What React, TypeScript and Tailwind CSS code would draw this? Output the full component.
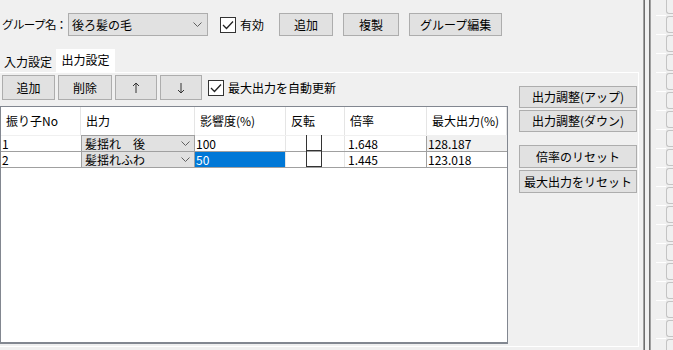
import React from "react";

const font = { fontFamily: '"Noto Sans CJK JP", "Noto Sans", sans-serif' };

function Chevron() {
  return (
    <svg width="9" height="5" viewBox="0 0 9 5" className="shrink-0">
      <path d="M0.5 0.5 L4.5 4.5 L8.5 0.5" fill="none" stroke="#606060" strokeWidth="1" />
    </svg>
  );
}

function Arrow({ down = false }: { down?: boolean }) {
  return (
    <svg width="8" height="12" viewBox="0 0 8 12" style={down ? { transform: "rotate(180deg)" } : undefined}>
      <path d="M4 1 L4 11 M1 4 L4 1 L7 4" fill="none" stroke="#333" strokeWidth="1" />
    </svg>
  );
}

function Check({ checked = true }: { checked?: boolean }) {
  return (
    <div className="w-[16px] h-[16px] bg-white border border-[#333] flex items-center justify-center shrink-0">
      {checked && (
        <svg width="12" height="10" viewBox="0 0 12 10">
          <path d="M1 5 L4.5 8.5 L11 1.5" fill="none" stroke="#222" strokeWidth="1.3" />
        </svg>
      )}
    </div>
  );
}

function Btn({ children, className = "" }: { children: React.ReactNode; className?: string }) {
  return (
    <div
      className={
        "bg-[#e1e1e1] border border-[#adadad] flex items-center justify-center text-[12px] text-black whitespace-nowrap shrink-0 " +
        className
      }
    >
      {children}
    </div>
  );
}

const cols = [80, 114, 91, 59, 82, 80];
const headers = ["振り子No", "出力", "影響度(%)", "反転", "倍率", "最大出力(%)"];
const rows = [
  { no: "1", out: "髪揺れ\u3000後", inf: "100", rate: "1.648", max: "128.187", sel: false },
  { no: "2", out: "髪揺れふわ", inf: "50", rate: "1.445", max: "123.018", sel: true },
];

function Grid() {
  return (
    <div className="w-[508px] h-[238px] bg-white border border-[#828790] border-b-2 text-[12px] text-black">
      <div className="flex h-[29px] border-b border-[#f0f0f0]">
        {headers.map((h, i) => (
          <div
            key={h}
            style={{ width: cols[i] }}
            className="border-r border-[#e5e5e5] pl-[5px] flex items-center whitespace-nowrap"
          >
            {h}
          </div>
        ))}
      </div>
      {rows.map((r) => (
        <div key={r.no} className="flex h-[16px] border-b border-[#a0a0a0] leading-[15px]">
          <div style={{ width: cols[0] }} className="pl-[1px]">
            {r.no}
          </div>
          <div
            style={{ width: cols[1] }}
            className="bg-[#e1e1e1] border border-[#a0a0a0] flex items-center justify-between pl-[3px] pr-[4px] -mt-[1px] h-[17px]"
          >
            <span>{r.out}</span>
            <Chevron />
          </div>
          <div
            style={{ width: cols[2] }}
            className={"pl-[1px] border-r border-[#e5e5e5] " + (r.sel ? "bg-[#0078d7] text-white" : "")}
          >
            {r.inf}
          </div>
          <div style={{ width: cols[3] }} className="border-r border-[#e5e5e5] flex justify-center">
            <div className="w-[16px] h-[16px] border-x border-b border-[#333] -mt-[1px] -ml-[3px]" />
          </div>
          <div style={{ width: cols[4] }} className="pl-[3px] border-r border-[#a0a0a0]">
            {r.rate}
          </div>
          <div
            style={{ width: cols[5] }}
            className={"pl-[1px] " + (r.sel ? "" : "bg-[#f0f0f0]")}
          >
            {r.max}
          </div>
        </div>
      ))}
    </div>
  );
}

function Strip() {
  const items = Array.from({ length: 20 });
  return (
    <div className="w-[22px] flex flex-col -mt-[3px]">
      {items.map((_, i) => (
        <div key={i} className="h-[19px] flex shrink-0">
          <div className="w-[15px] pl-[5px]">
            <div className="h-[1px] bg-white mt-[18px]" />
          </div>
          <div className="flex-1 h-[17px] border border-r-0 border-[#c4c4c4] rounded-l-[3px]" />
        </div>
      ))}
    </div>
  );
}

export default function App() {
  return (
    <div style={font} className="w-[673px] h-[350px] bg-[#f0f0f0] flex overflow-hidden text-black">
      <div className="w-[643px] flex flex-col">
        {/* top row */}
        <div className="flex items-center h-[23px] mt-[13px] pl-[2px]">
          <span className="text-[11.5px] tracking-[-0.6px] w-[66px] whitespace-nowrap shrink-0">グループ名：</span>
          <div className="w-[140px] h-[23px] bg-[#e1e1e1] border border-[#adadad] flex items-center justify-between pl-[3px] pr-[5px] text-[12px] shrink-0">
            <span>後ろ髪の毛</span>
            <Chevron />
          </div>
          <div className="ml-[12px] flex items-center gap-[4px]">
            <Check />
            <span className="text-[12px]">有効</span>
          </div>
          <Btn className="ml-[15px] w-[54px] h-[23px]">追加</Btn>
          <Btn className="ml-[10px] w-[56px] h-[23px]">複製</Btn>
          <Btn className="ml-[10px] w-[93px] h-[23px]">グループ編集</Btn>
        </div>
        {/* tabs */}
        <div className="flex items-end h-[23px] mt-[13px] text-[12px]">
          <div className="w-[56px] h-[20px] pl-[4px] flex items-center">入力設定</div>
          <div className="w-[59px] h-[23px] bg-white flex items-center justify-center pb-[2px]">出力設定</div>
        </div>
        {/* panel */}
        <div className="w-[639px] h-[275px] border-t border-r border-b border-white flex flex-col">
          <div className="flex items-center h-[25px] mt-[2px] pl-[2px] gap-[3px]">
            <Btn className="w-[53px] h-[25px]">追加</Btn>
            <Btn className="w-[54px] h-[25px]">削除</Btn>
            <Btn className="w-[42px] h-[25px]">
              <Arrow />
            </Btn>
            <Btn className="w-[42px] h-[25px]">
              <Arrow down />
            </Btn>
            <div className="ml-[3px] flex items-center gap-[4px]">
              <Check />
              <span className="text-[12px]">最大出力を自動更新</span>
            </div>
          </div>
          <div className="flex mt-[6px]">
            <Grid />
            <div className="ml-[11px] mt-[-20px] flex flex-col w-[118px]">
              <Btn className="h-[22px]">出力調整(アップ)</Btn>
              <Btn className="h-[22px] mt-[2px]">出力調整(ダウン)</Btn>
              <Btn className="h-[23px] mt-[13px]">倍率のリセット</Btn>
              <Btn className="h-[23px] mt-[2px]">最大出力をリセット</Btn>
            </div>
          </div>
        </div>
      </div>
      <div className="w-[8px] flex">
        <div className="w-[2px] bg-[#6e6e6e] border-l border-[#a0a0a0]" />
        <div className="w-[4px]" />
        <div className="w-[2px] bg-[#6e6e6e] border-r border-[#a0a0a0]" />
      </div>
      <Strip />
    </div>
  );
}
